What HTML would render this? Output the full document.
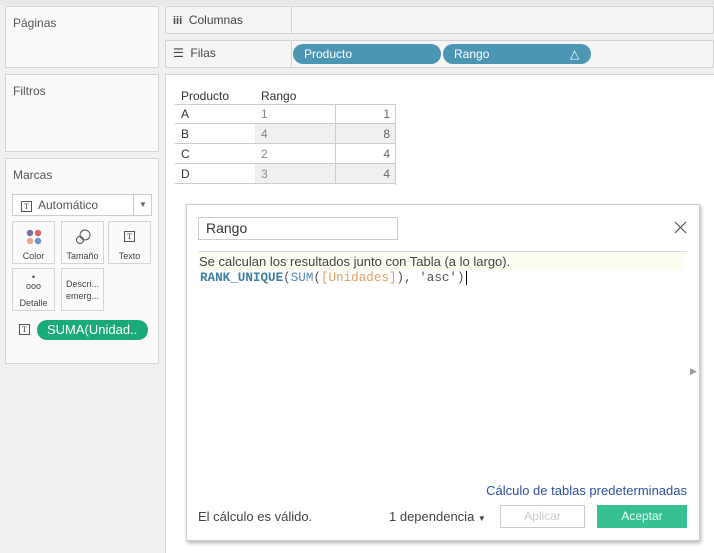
<!DOCTYPE html>
<html><head><meta charset="utf-8"><style>
*{box-sizing:border-box;margin:0;padding:0}
body{width:714px;height:553px;background:#f0f0f0;font-family:"Liberation Sans",sans-serif;font-size:12px;color:#333;position:relative;overflow:hidden}
.a{position:absolute}
.panel{position:absolute;background:#fafafa;border:1px solid #d4d4d4}
.lbl{position:absolute;left:7px;top:9px;font-size:12px;color:#555}
.card{position:absolute;background:#fafafa;border:1px solid #d4d4d4;width:43px;height:43px;font-size:9px;color:#444;text-align:center}
.pill{position:absolute;height:20px;border-radius:10px;color:#fff;font-size:12px;line-height:20px;padding-left:11px}
.td{position:absolute;height:20px;line-height:20px;font-size:12px;border-bottom:1px solid #ccc}
.ti{display:inline-block;width:11px;height:11px;border:1px solid #555;font-size:8px;line-height:9px;text-align:center;color:#444;font-family:"Liberation Serif",serif}
</style></head><body>
<div class="a" style="left:0;top:0;width:714px;height:5px;background:#e8e8e8"></div>
<div class="panel" style="left:5px;top:6px;width:154px;height:62px"><div class="lbl">Páginas</div></div>
<div class="panel" style="left:5px;top:74px;width:154px;height:78px"><div class="lbl">Filtros</div></div>
<div class="panel" style="left:5px;top:158px;width:154px;height:206px"><div class="lbl">Marcas</div></div>
<div class="a" style="left:12px;top:194px;width:140px;height:22px;background:#fff;border:1px solid #ccc;font-size:12px;line-height:20px;color:#555;padding-left:8px"><span class="ti">T</span>&nbsp; Automático<span class="a" style="left:120px;top:0;width:19px;height:20px;border-left:1px solid #ccc;font-size:8px;text-align:center;color:#666">▼</span></div>
<div class="card" style="left:12px;top:221px"><svg class="a" style="left:12px;top:6px" width="18" height="18"><circle cx="5" cy="5" r="3.2" fill="#7b6d9e"/><circle cx="13" cy="5" r="3.2" fill="#e0636b"/><circle cx="5" cy="13" r="3.2" fill="#e9a98a"/><circle cx="13" cy="13" r="3.2" fill="#6b93c9"/></svg><div class="a" style="top:29px;width:100%">Color</div></div>
<div class="card" style="left:61px;top:221px"><svg class="a" style="left:13px;top:6px" width="17" height="17" fill="none" stroke="#555"><circle cx="10" cy="7" r="5"/><circle cx="5" cy="12" r="3.5"/></svg><div class="a" style="top:29px;width:100%">Tamaño</div></div>
<div class="card" style="left:108px;top:221px"><span class="ti a" style="left:15px;top:9px">T</span><div class="a" style="top:29px;width:100%">Texto</div></div>
<div class="card" style="left:12px;top:268px"><div class="a" style="top:4px;width:100%;font-size:9px;line-height:9px">•<br>ooo</div><div class="a" style="top:29px;width:100%">Detalle</div></div>
<div class="card" style="left:61px;top:268px;text-align:left;padding:9px 0 0 4px;line-height:12px">Descri...<br>emerg...</div>
<span class="ti a" style="left:19px;top:324px">T</span>
<div class="pill" style="left:37px;top:320px;width:111px;background:#19a97b;font-size:13px;padding-left:10px">SUMA(Unidad..</div>

<div class="panel" style="left:165px;top:6px;width:549px;height:28px;background:#f5f5f5"><div class="a" style="left:125px;top:0;height:26px;border-left:1px solid #d4d4d4"></div><div class="a" style="left:7px;top:6px;font-size:12px;color:#444"><b style="font-size:11px">iii</b>&nbsp; Columnas</div></div>
<div class="panel" style="left:165px;top:40px;width:549px;height:28px;background:#f5f5f5"><div class="a" style="left:125px;top:0;height:26px;border-left:1px solid #d4d4d4"></div><div class="a" style="left:7px;top:5px;font-size:12px;color:#444">☰&nbsp; Filas</div></div>
<div class="pill" style="left:293px;top:44px;width:148px;background:#4b96b3">Producto</div>
<div class="pill" style="left:443px;top:44px;width:148px;background:#4b96b3">Rango<span class="a" style="left:127px">△</span></div>

<div class="a" style="left:165px;top:74px;width:549px;height:479px;background:#fff;border-left:1px solid #d4d4d4;border-top:1px solid #d4d4d4"></div>
<div class="a" style="left:181px;top:89px;font-size:12px">Producto</div>
<div class="a" style="left:261px;top:89px;font-size:12px">Rango</div>
<div class="a" style="left:175px;top:104px;width:221px;border-top:1px solid #ccc"></div>
<div class="a" style="left:255px;top:124px;width:140px;height:20px;background:#f0f0f0"></div>
<div class="a" style="left:255px;top:164px;width:140px;height:20px;background:#f0f0f0"></div>
<div class="a" style="left:335px;top:104px;height:80px;border-left:1px solid #ccc"></div>
<div class="a" style="left:395px;top:104px;height:81px;border-left:1px solid #ccc"></div>
<div class="td" style="left:175px;top:104px;width:221px;padding-left:6px">A<span class="a" style="left:86px;color:#888">1</span><span class="a" style="right:6px;color:#666">1</span></div>
<div class="td" style="left:175px;top:124px;width:221px;padding-left:6px">B<span class="a" style="left:86px;color:#888">4</span><span class="a" style="right:6px;color:#666">8</span></div>
<div class="td" style="left:175px;top:144px;width:221px;padding-left:6px">C<span class="a" style="left:86px;color:#888">2</span><span class="a" style="right:6px;color:#666">4</span></div>
<div class="td" style="left:175px;top:164px;width:221px;padding-left:6px">D<span class="a" style="left:86px;color:#888">3</span><span class="a" style="right:6px;color:#666">4</span></div>

<div class="a" style="left:186px;top:204px;width:514px;height:337px;background:#fff;border:1px solid #ccc;box-shadow:1px 2px 4px rgba(0,0,0,.3)"></div>
<div class="a" style="left:198px;top:217px;width:200px;height:23px;border:1px solid #ccc;font-size:14px;line-height:21px;padding-left:7px;color:#333">Rango</div>
<svg class="a" style="left:674px;top:221px" width="13" height="13" stroke="#555" stroke-width="1.2"><path d="M1 1L12 12M12 1L1 12"/></svg>
<div class="a" style="left:198px;top:251px;width:489px;border-top:1px solid #ddd"></div>
<div class="a" style="left:198px;top:253px;width:486px;height:17px;background:#fdfcf0"></div>
<div class="a" style="left:199px;top:254px;font-size:13px;color:#444">Se calculan los resultados junto con Tabla (a lo largo).</div>
<div class="a" style="left:200px;top:271px;font-family:'Liberation Mono',monospace;font-size:12.6px;color:#555;white-space:nowrap"><b style="color:#3e7fa6">RANK_UNIQUE</b>(<span style="color:#4f8cb0">SUM</span>(<span style="color:#e0a060">[Unidades]</span>), 'asc')<span style="border-left:1px solid #000;margin-left:1px"></span></div>
<div class="a" style="left:690px;top:366px;font-size:9px;color:#999">▶</div>
<div class="a" style="right:27px;top:483px;font-size:13px;color:#2e4fa3">Cálculo de tablas predeterminadas</div>
<div class="a" style="left:198px;top:509px;font-size:13px;color:#444">El cálculo es válido.</div>
<div class="a" style="left:389px;top:509px;font-size:13px;color:#444">1 dependencia <span style="font-size:8px">▼</span></div>
<div class="a" style="left:500px;top:505px;width:85px;height:23px;border:1px solid #ccc;color:#ccc;font-size:12px;text-align:center;line-height:21px">Aplicar</div>
<div class="a" style="left:597px;top:505px;width:90px;height:23px;background:#36c094;color:#e8fff5;font-size:12px;text-align:center;line-height:23px">Aceptar</div>
</body></html>
